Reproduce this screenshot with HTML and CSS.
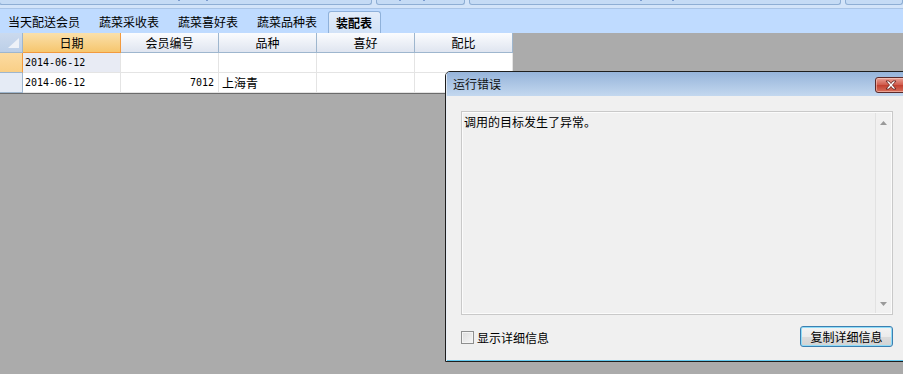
FILE: index.html
```html
<!DOCTYPE html>
<html lang="zh-CN">
<head>
<meta charset="utf-8">
<title>装配表</title>
<link rel="stylesheet" href="styles.css">
</head>
<body>
<div class="topstrip">
  <div class="tbtn b1"></div>
  <div class="tbtn b2"></div>
  <div class="tbtn b3"></div>
  <div class="tbtn b4"></div>
</div>
<div class="tabs">
  <div class="tab">当天配送会员</div>
  <div class="tab">蔬菜采收表</div>
  <div class="tab">蔬菜喜好表</div>
  <div class="tab">蔬菜品种表</div>
  <div class="tab active">装配表</div>
</div>
<div class="gridwrap">
  <div class="grid">
    <div class="corner"><svg width="11" height="10" viewBox="0 0 11 10"><polygon points="0,10 11,10 11,0" fill="#eef2f8"/></svg></div>
    <div class="hd sel">日期</div>
    <div class="hd">会员编号</div>
    <div class="hd">品种</div>
    <div class="hd">喜好</div>
    <div class="hd">配比</div>

    <div class="rh cur"></div>
    <div class="c mono selc">2014-06-12</div>
    <div class="c"></div>
    <div class="c"></div>
    <div class="c"></div>
    <div class="c"></div>

    <div class="rh"></div>
    <div class="c mono">2014-06-12</div>
    <div class="c mono num">7012</div>
    <div class="c txt">上海青</div>
    <div class="c"></div>
    <div class="c"></div>
  </div>
</div>

<div class="dialog">
  <div class="titlebar">
    <span class="title">运行错误</span>
    <div class="closebtn">
      <svg width="14" height="10" viewBox="0 0 14 10">
        <path d="M2 1 L5 1 L7 3.5 L9 1 L12 1 L8.5 5 L12 9 L9 9 L7 6.5 L5 9 L2 9 L5.5 5 Z" fill="#ffffff" stroke="#5a1a14" stroke-width="0.8" stroke-linejoin="round"/>
      </svg>
    </div>
  </div>
  <div class="dbody">
    <div class="msgbox">
      <div class="msg">调用的目标发生了异常。</div>
      <div class="vscroll">
        <svg class="arr" width="7" height="4" viewBox="0 0 7 4"><polygon points="0,4 7,4 3.5,0" fill="#9a9a9a"/></svg>
        <svg class="arr" width="7" height="4" viewBox="0 0 7 4"><polygon points="0,0 7,0 3.5,4" fill="#9a9a9a"/></svg>
      </div>
    </div>
    <div class="footer">
      <label class="chk"><span class="box"></span><span>显示详细信息</span></label>
      <div class="btn">复制详细信息</div>
    </div>
  </div>
</div>
</body>
</html>
```
FILE: styles.css
```css
html, body {
  margin: 0;
  padding: 0;
}
body {
  width: 903px;
  height: 374px;
  overflow: hidden;
  background: #ababab;
  font-family: "Noto Sans CJK SC", "Liberation Sans", sans-serif;
  font-size: 12px;
  color: #000;
  position: relative;
}

/* top strip with cut-off buttons */
.topstrip {
  height: 9px;
  background: #d3e4f9;
  border-bottom: 1px solid #a9c4e6;
  box-sizing: border-box;
  display: flex;
  gap: 4px;
  align-items: flex-start;
}
.tbtn {
  height: 5px;
  box-sizing: border-box;
  background: #c5dbf5;
  border: 1px solid #8eaed4;
  border-top: none;
  border-radius: 0 0 3px 3px;
  position: relative;
}
.tbtn::after {
  content: "";
  position: absolute;
  top: 0;
  height: 1px;
  border-left: 2px solid #5d82c0;
  border-right: 2px solid #5d82c0;
  opacity: 0.7;
}
.b1 { width: 383px; margin-left: -1px; }
.b1::after { left: 178px; width: 26px; }
.b2 { width: 92px; }
.b2::after { left: 22px; width: 22px; }
.b3 { width: 382px; }
.b3::after { left: 170px; width: 30px; }
.b4 { width: 60px; }
.b4::after { display: none; }

/* tabs */
.tabs {
  height: 24px;
  background: #bfdbff;
  display: flex;
  align-items: flex-end;
  gap: 3px;
  box-sizing: border-box;
}
.tab {
  height: 22px;
  line-height: 22px;
  padding: 0 8px;
  white-space: nowrap;
  box-sizing: border-box;
}
.tab.active {
  font-weight: bold;
  background: linear-gradient(#e3edfa, #d2e2f7);
  border: 1px solid #8fb1da;
  border-bottom: none;
  border-radius: 3px 3px 0 0;
  padding: 0 8px 0 7px;
  line-height: 21px;
}

/* grid */
.gridwrap {
  height: 61px;
  border-bottom: 1px solid #6b6b6b;
  box-sizing: border-box;
  background: #ababab;
}
.grid {
  display: grid;
  grid-template-columns: 23px repeat(5, 98px);
  grid-auto-rows: 20px;
  width: 513px;
  background: #fff;
}
.grid > div {
  box-sizing: border-box;
}
.corner {
  background: linear-gradient(#cbdaee, #bccfe8);
  border-right: 1px solid #9eb6ce;
  border-bottom: 1px solid #9eb6ce;
  display: flex;
  justify-content: flex-end;
  align-items: flex-end;
  padding: 0 3px 4px 0;
}
.corner svg { display: block; }
.hd {
  background: linear-gradient(#fbfcfe, #dfe5f0);
  border-right: 1px solid #9eb6ce;
  border-bottom: 1px solid #9eb6ce;
  text-align: center;
  line-height: 19px;
}
.hd.sel {
  background: linear-gradient(#fae0ab, #f6c66e);
  border-right: 1px solid #f29a3e;
  border-bottom: 1px solid #f29a3e;
}
.rh {
  background: #e5ebf5;
  border-right: 1px solid #9eb6ce;
  border-bottom: 1px solid #9eb6ce;
}
.rh.cur {
  background: linear-gradient(#fcdba2, #f9cf86);
  border-right: 1px solid #f29a3e;
}
.c {
  border-right: 1px solid #e4e4e4;
  border-bottom: 1px solid #e4e4e4;
  line-height: 19px;
  white-space: nowrap;
  overflow: hidden;
}
.c.mono {
  font-family: "DejaVu Sans Mono", "Liberation Mono", monospace;
  font-size: 10px;
  padding-left: 2px;
}
.c.num {
  text-align: right;
  padding-right: 4px;
}
.c.txt {
  padding-left: 3px;
}
.c.selc {
  background: #e8ebf4;
}

/* dialog */
.dialog {
  position: absolute;
  left: 445px;
  top: 71px;
  width: 478px;
  height: 291px;
  box-sizing: border-box;
  border: 1px solid #1e1e1e;
  border-radius: 5px 5px 0 0;
  background: #f0f0f0;
  box-shadow: inset 1px 0 0 #e8eef6, inset 0 -1px 0 #63c9ef;
  display: flex;
  flex-direction: column;
  overflow: hidden;
}
.titlebar {
  height: 24px;
  flex: none;
  background: linear-gradient(#96b4da, #c3d8ef);
  display: flex;
  align-items: flex-start;
  padding-left: 6px;
  border-left: 1px solid #dfe8f3;
}
.title {
  line-height: 24px;
  color: #111;
}
.closebtn {
  margin-left: auto;
  margin-right: 15px;
  margin-top: 5px;
  width: 32px;
  height: 16px;
  box-sizing: border-box;
  border: 1px solid #5b2a2a;
  border-radius: 3px;
  background: linear-gradient(#e9a296, #d0594a 50%, #c23f2f 51%, #d7705c);
  box-shadow: inset 0 0 0 1px rgba(255, 220, 210, 0.5);
  display: flex;
  align-items: center;
  justify-content: center;
}
.closebtn svg { display: block; }

.dbody {
  flex: 1;
  padding: 15px 0 0 15px;
  display: flex;
  flex-direction: column;
}
.msgbox {
  width: 432px;
  height: 204px;
  box-sizing: border-box;
  border: 1px solid #c9c9c9;
  box-shadow: inset 0 0 0 1px #fbfbfb;
  background: #f0f0f0;
  display: flex;
}
.msg {
  flex: 1;
  padding: 2px 2px;
  line-height: 15px;
}
.vscroll {
  width: 16px;
  box-sizing: border-box;
  border-left: 1px solid #e2e2e2;
  margin: 1px 1px 1px 0;
  background: #f1f1f1;
  display: flex;
  flex-direction: column;
  justify-content: space-between;
  align-items: center;
  padding: 8px 0 7px 0;
}
.arr { display: block; }

.footer {
  width: 432px;
  margin-top: 11px;
  height: 21px;
  display: flex;
  align-items: center;
  justify-content: space-between;
}
.chk {
  display: flex;
  align-items: center;
  gap: 3px;
  margin-top: 1px;
}
.box {
  width: 13px;
  height: 13px;
  box-sizing: border-box;
  border: 1px solid #8e8f8f;
  background: linear-gradient(135deg, #dcdcdc, #f6f6f6);
  box-shadow: inset 0 0 0 1px #f4f4f4;
}
.btn {
  width: 93px;
  height: 21px;
  box-sizing: border-box;
  border: 1px solid #3c7fb1;
  border-radius: 3px;
  background: linear-gradient(#f3f3f3, #ebebeb 50%, #dcdcdc 51%, #d3d3d3);
  box-shadow: inset 0 0 0 1px #8fdcf7;
  text-align: center;
  line-height: 19px;
}
```
